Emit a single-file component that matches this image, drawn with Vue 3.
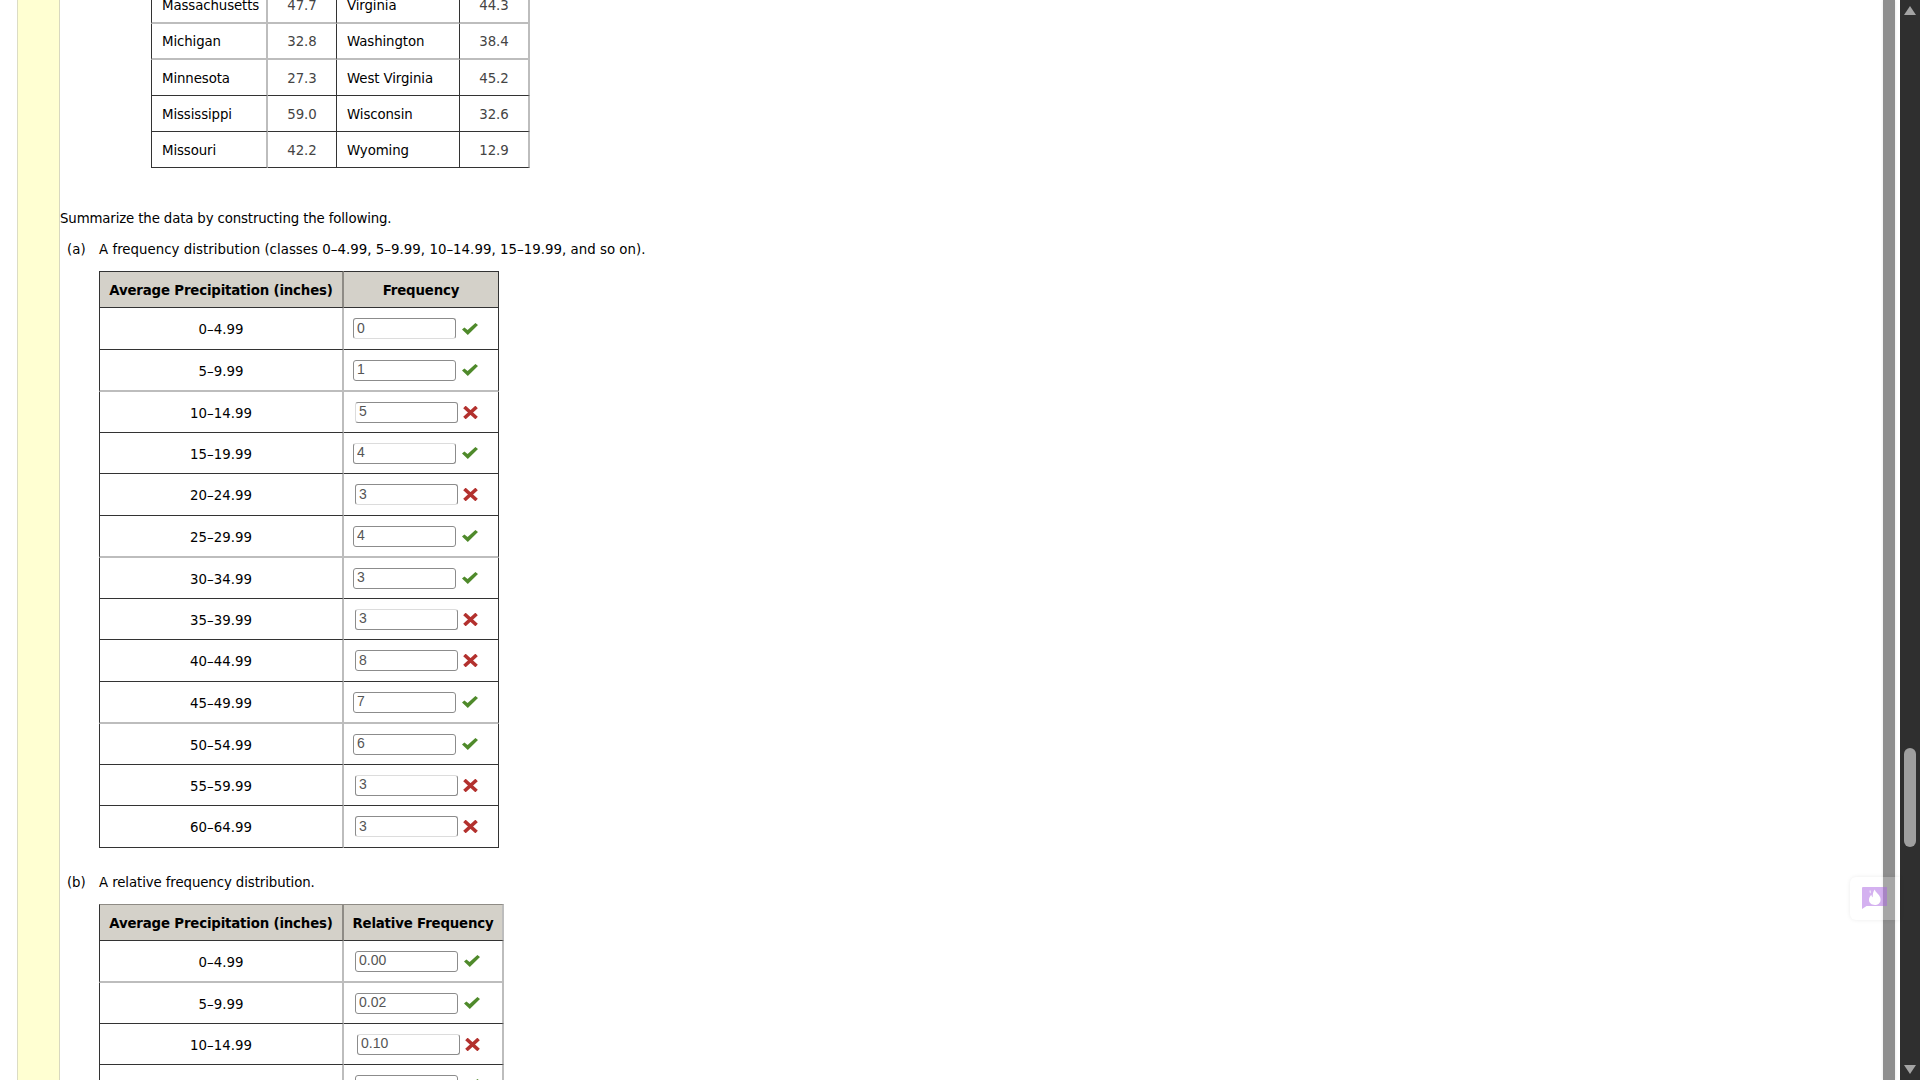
<script setup>
const stateRows = [
  ["Massachusetts", "47.7", "Virginia", "44.3"],
  ["Michigan", "32.8", "Washington", "38.4"],
  ["Minnesota", "27.3", "West Virginia", "45.2"],
  ["Mississippi", "59.0", "Wisconsin", "32.6"],
  ["Missouri", "42.2", "Wyoming", "12.9"],
];

// lite = which edge of the input looks washed out in the reference
const freqRows = [
  { label: "0–4.99", value: "0", ok: true, lite: "b" },
  { label: "5–9.99", value: "1", ok: true },
  { label: "10–14.99", value: "5", ok: false, lite: "l" },
  { label: "15–19.99", value: "4", ok: true, lite: "t" },
  { label: "20–24.99", value: "3", ok: false, lite: "b" },
  { label: "25–29.99", value: "4", ok: true },
  { label: "30–34.99", value: "3", ok: true },
  { label: "35–39.99", value: "3", ok: false, lite: "t" },
  { label: "40–44.99", value: "8", ok: false },
  { label: "45–49.99", value: "7", ok: true },
  { label: "50–54.99", value: "6", ok: true },
  { label: "55–59.99", value: "3", ok: false, lite: "t" },
  { label: "60–64.99", value: "3", ok: false, lite: "b" },
];

const relRows = [
  { label: "0–4.99", value: "0.00", ok: true },
  { label: "5–9.99", value: "0.02", ok: true },
  { label: "10–14.99", value: "0.10", ok: false, lite: "t" },
  { label: "15–19.99", value: "", ok: true },
];

const tables = [
  { kind: "freq", tag: "(a)", title: "A frequency distribution (classes 0–4.99, 5–9.99, 10–14.99, 15–19.99, and so on).", head: "Frequency", rows: freqRows },
  { kind: "rel", tag: "(b)", title: "A relative frequency distribution.", head: "Relative Frequency", rows: relRows },
];
</script>

<template>
  <div class="page">
    <div class="gutter"></div>
    <div class="strip"></div>

    <main class="content">
      <table class="states">
        <tbody>
          <tr v-for="row in stateRows" :key="row[0]">
            <td class="name first">{{ row[0] }}</td>
            <td class="num grey-right">{{ row[1] }}</td>
            <td class="name">{{ row[2] }}</td>
            <td class="num last">{{ row[3] }}</td>
          </tr>
        </tbody>
      </table>

      <p class="intro">Summarize the data by constructing the following.</p>

      <section v-for="t in tables" :key="t.kind" class="part" :class="t.kind">
        <p class="part-title"><span class="tag">{{ t.tag }}</span>{{ t.title }}</p>
        <table class="dist">
          <thead>
            <tr>
              <th class="col-a">Average Precipitation (inches)</th>
              <th class="col-b">{{ t.head }}</th>
            </tr>
          </thead>
          <tbody>
            <tr v-for="row in t.rows" :key="row.label">
              <td class="col-a">{{ row.label }}</td>
              <td class="col-b">
                <div class="answer" :class="{ wrong: !row.ok }">
                  <input class="box" :class="row.lite ? 'lite-' + row.lite : ''" type="text" readonly :value="row.value" />
                  <svg v-if="row.ok" class="check" width="16" height="12" viewBox="0 0 16 12">
                    <path d="M0 6.4 L2.4 4.4 L5.6 6.9 L13.4 0 L16 2 L5.8 12 Z" fill="#4f8a2b" />
                  </svg>
                  <svg v-else class="cross" width="15" height="13" viewBox="0 0 15 13">
                    <path d="M1.4 1 L13.6 12 M13.6 1 L1.4 12" stroke="#b3312e" stroke-width="3.6" fill="none" />
                  </svg>
                </div>
              </td>
            </tr>
          </tbody>
        </table>
      </section>
    </main>

    <div class="inner-bar"></div>
    <div class="inner-gap"></div>
    <div class="outer-bar">
      <span class="arrow up"></span>
      <span class="thumb"></span>
      <span class="arrow down"></span>
    </div>

    <div class="widget">
      <svg width="25" height="22" viewBox="0 0 25 22">
        <path d="M1 0 H25 V19 H4.5 L0 22 V1 Q0 0 1 0 Z" fill="#ab66e2" />
        <path d="M12.6 2.5 C13.4 5.5 18.6 8 18.6 12.4 C18.6 16 15.9 18 12.8 18 C9.6 18 7 16 7 12.8 C7 10.6 8.2 9 9.3 7.8 C9.5 9 10 9.9 10.8 10.2 C10.5 7.4 11.2 4.6 12.6 2.5 Z" fill="#fff" />
        <path d="M8 3 C8.7 4 8.9 5 8.4 6.4 C7.6 5.6 7.4 4.3 8 3 Z" fill="#fff" />
      </svg>
    </div>
  </div>
</template>

<style scoped>
.page {
  position: relative;
  display: flex;
  width: 1920px;
  height: 1080px;
  overflow: hidden;
  background: #fff;
  color: #000;
  font-family: "DejaVu Sans", Verdana, sans-serif;
  font-size: 13.33px;
}
.gutter {
  width: 17px;
  flex: none;
}
.strip {
  width: 43px;
  flex: none;
  box-sizing: border-box;
  background: #ffffd2;
  border-left: 1px solid #dcdcc4;
  border-right: 1px solid #d8d8c0;
}
.content {
  flex: 1;
  min-width: 0;
}

/* data table, scrolled partly out of view */
.states {
  margin: -12px 0 0 91px;
  border-collapse: separate;
  border-spacing: 0;
}
.states td {
  box-sizing: border-box;
  height: 36px;
  padding: 1px 0 0;
  border-bottom: 1px solid #333;
  border-right: 1px solid #333;
}
.states tr:nth-child(1) td,
.states tr:nth-child(2) td {
  border-bottom: 2px solid #bdbdbd;
}
.states .name {
  padding-left: 10px;
  letter-spacing: -0.1px;
}
.states .first {
  width: 117px;
  border-left: 1px solid #333;
  border-right: 2px solid #bdbdbd;
}
.states td:nth-child(2) {
  width: 69px;
}
.states td:nth-child(3) {
  width: 123px;
}
.states .num {
  text-align: center;
  color: #444;
}
.states .last {
  width: 70px;
  border-right: 2px solid #bdbdbd;
}

.intro {
  margin: 41px 0 0;
  line-height: 20px;
  letter-spacing: -0.14px;
}
.part-title {
  margin: 11px 0 11px;
  line-height: 20px;
  padding-left: 7px;
  letter-spacing: 0.03px;
}
.tag {
  display: inline-block;
  width: 32px;
}
.rel .part-title {
  margin-top: 25px;
  letter-spacing: -0.1px;
}

.dist {
  margin-left: 39px;
  border-collapse: separate;
  border-spacing: 0;
}
.dist th,
.dist td {
  box-sizing: border-box;
  padding: 2px 0 0;
  text-align: center;
  border-bottom: 1px solid #333;
}
.dist th {
  height: 37px;
  background: #d4d1c9;
  font-weight: bold;
  letter-spacing: -0.17px;
  border-top: 1px solid #333;
}
.dist td {
  height: 41px;
}
.dist td.col-b {
  padding-top: 0;
}
.dist .col-a {
  width: 245px;
  border-left: 1px solid #333;
  border-right: 2px solid #bdbdbd;
}
.dist th.col-a {
  border-right-color: #8e8b85;
}
.dist .col-b {
  width: 155px;
  border-right: 1px solid #333;
}
.freq tbody tr:nth-child(4n + 1) td,
.freq tbody tr:nth-child(4n + 2) td,
.rel tbody tr:nth-child(4n + 1) td {
  height: 42px;
}
.freq tbody tr:nth-child(4n + 2) td,
.rel tbody tr:nth-child(4n + 1) td {
  border-bottom: 2px solid #bdbdbd;
}

/* second table has the wider column and grey outer edge */
.rel .dist .col-b {
  width: 160px;
  border-right: 2px solid #bdbdbd;
}
.rel .dist th {
  border-top-color: #8e8b85;
}

.answer {
  display: flex;
  align-items: center;
  padding-left: 9px;
}
.answer.wrong {
  padding-left: 11px;
}
.rel .answer {
  padding-left: 11px;
}
.rel .answer.wrong {
  padding-left: 13px;
}
.box {
  box-sizing: border-box;
  width: 103px;
  height: 21px;
  padding: 0 3px 2px;
  border: 1px solid #8c8c8c;
  border-radius: 3px;
  background: #fff;
  color: #555;
  font-family: "Liberation Sans", Arial, sans-serif;
  font-size: 14px;
  outline: none;
}
.lite-t {
  border-top-color: #dcdcdc;
}
.lite-b {
  border-bottom-color: #dcdcdc;
}
.lite-l {
  border-left-color: #dcdcdc;
}
.check {
  margin-left: 6px;
}
.cross {
  margin-left: 5px;
}

/* the two scrollbars on the right */
.inner-bar {
  width: 12px;
  flex: none;
  background: #8e8e8e;
  box-shadow: 0 0 3px rgba(0, 0, 0, 0.12);
}
.inner-gap {
  width: 5px;
  flex: none;
}
.outer-bar {
  position: relative;
  width: 20px;
  flex: none;
  background: #2f2f2f;
}
.thumb {
  position: absolute;
  left: 4px;
  top: 748px;
  width: 12px;
  height: 99px;
  border-radius: 6px;
  background: #9f9f9f;
}
.arrow {
  position: absolute;
  left: 4px;
  width: 0;
  height: 0;
  border-left: 6px solid transparent;
  border-right: 6px solid transparent;
}
.arrow.up {
  top: 6px;
  border-bottom: 9px solid #a3a3a3;
}
.arrow.down {
  top: 1065px;
  border-top: 9px solid #a3a3a3;
}

.widget {
  position: absolute;
  left: 1850px;
  top: 877px;
  width: 50px;
  height: 43px;
  box-sizing: border-box;
  padding: 10px 0 0 12px;
  border-radius: 6px 0 0 6px;
  background: rgba(255, 255, 255, 0.22);
  box-shadow: 0 0 4px rgba(0, 0, 0, 0.08);
}
.widget svg {
  display: block;
  opacity: 0.5;
}
</style>
